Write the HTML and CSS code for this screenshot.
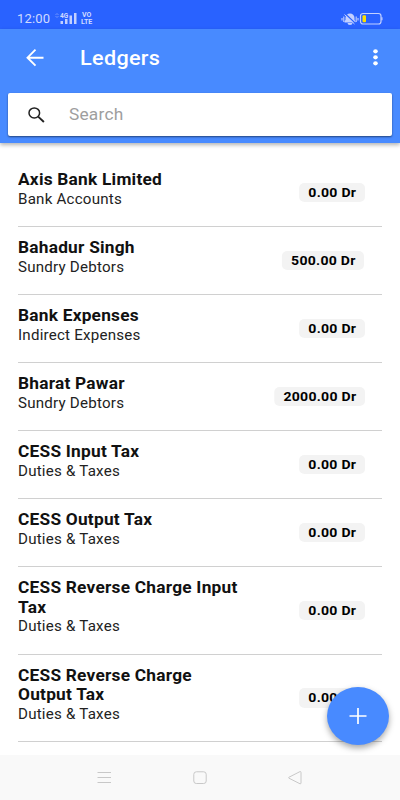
FILE: index.html
```html
<!DOCTYPE html>
<html lang="en">
<head>
    <meta charset="UTF-8">
    <meta name="viewport" content="width=device-width, initial-scale=1.0">
    <title>Ledgers</title>
    <link rel="stylesheet" href="styles.css">
</head>
<body>
    <div class="status-bar">
        <span class="time">12:00</span>
        <svg class="signal" width="24" height="14" viewBox="0 0 24 14">
            <path d="M0.5 3L2 1.500L3.500 3M0.500 4L2 5.500L3.500 4" fill="none" stroke="#7f9fff" stroke-width="0.800"/>
            <text x="5" y="5.500" font-size="6.500" font-weight="bold" fill="#d0daff">4G</text>
            <path d="M5.500 9h2.500v3h-2.500zM10 7h2.500v5h-2.500zM14.500 3.500h2.500v8.500h-2.500zM19 1h2.500v11h-2.500z" fill="#c3d0ff"/>
        </svg>
        <span class="volte">VO<br>LTE</span>
        <svg class="mute" width="18" height="14" viewBox="0 0 18 14">
            <path d="M3.500 10.500V9l1-1V6a4.500 4.500 0 0 1 9 0v2l1 1v1.500zM6.500 11h5a2.500 2 0 0 1-5 0z" fill="#c3d0ff"/>
            <path d="M1 6v2.500M2.800 4.500v5.500M15.200 4.500v5.500M17 6v2.500" stroke="#c3d0ff" stroke-width="1.100"/>
            <path d="M4.500 2l10 9.500" stroke="#2962ff" stroke-width="1.200"/>
            <path d="M3.500 2.500l10 9.500" stroke="#c3d0ff" stroke-width="1"/>
        </svg>
        <svg class="battery" width="24" height="14" viewBox="0 0 24 14">
            <rect x="1.500" y="1.500" width="20.500" height="10.500" rx="2.500" fill="none" stroke="#c3d0ff" stroke-width="1.200"/>
            <rect x="3.500" y="3.200" width="3.500" height="7" rx="1" fill="#ffe000"/>
            <path d="M22.900 5.200v3" stroke="#c3d0ff" stroke-width="1.200"/>
        </svg>
    </div>

    <header class="header">
        <div class="toolbar">
            <svg class="back" width="18" height="18" viewBox="0 0 18 18">
                <path d="M17.500 8.700H1.500M9.500 0.700L1.500 8.700L9.500 16.700" fill="none" stroke="#fff" stroke-width="1.900"/>
            </svg>
            <h1><span class="wide">Ledgers</span></h1>
            <svg class="more" width="6" height="18" viewBox="0 0 6 18">
                <g fill="#fff">
                    <ellipse cx="3.500" cy="2.300" rx="2.300" ry="2.100"/>
                    <ellipse cx="3.500" cy="8.300" rx="2.300" ry="2.100"/>
                    <ellipse cx="3.500" cy="14.300" rx="2.300" ry="2.100"/>
                </g>
            </svg>
        </div>
        <div class="search">
            <svg width="17" height="16" viewBox="0 0 17 16">
                <ellipse cx="6.300" cy="5.900" rx="5.300" ry="5" fill="none" stroke="#222" stroke-width="1.500"/>
                <path d="M10.200 9.600L15.900 15" stroke="#222" stroke-width="1.900"/>
            </svg>
            <span class="placeholder wide">Search</span>
        </div>
    </header>

    <main class="ledgers">
        <div class="ledger">
            <div class="info">
                <h2>Axis Bank Limited</h2>
                <p>Bank Accounts</p>
            </div>
            <span class="balance">0.00 Dr</span>
        </div>
        <div class="ledger">
            <div class="info">
                <h2>Bahadur Singh</h2>
                <p>Sundry Debtors</p>
            </div>
            <span class="balance">500.00 Dr</span>
        </div>
        <div class="ledger">
            <div class="info">
                <h2>Bank Expenses</h2>
                <p>Indirect Expenses</p>
            </div>
            <span class="balance">0.00 Dr</span>
        </div>
        <div class="ledger">
            <div class="info">
                <h2>Bharat Pawar</h2>
                <p>Sundry Debtors</p>
            </div>
            <span class="balance">2000.00 Dr</span>
        </div>
        <div class="ledger">
            <div class="info">
                <h2>CESS Input Tax</h2>
                <p>Duties &amp; Taxes</p>
            </div>
            <span class="balance">0.00 Dr</span>
        </div>
        <div class="ledger">
            <div class="info">
                <h2>CESS Output Tax</h2>
                <p>Duties &amp; Taxes</p>
            </div>
            <span class="balance">0.00 Dr</span>
        </div>
        <div class="ledger">
            <div class="info">
                <h2>CESS Reverse Charge Input<br>Tax</h2>
                <p>Duties &amp; Taxes</p>
            </div>
            <span class="balance">0.00 Dr</span>
        </div>
        <div class="ledger">
            <div class="info">
                <h2>CESS Reverse Charge<br>Output Tax</h2>
                <p>Duties &amp; Taxes</p>
            </div>
            <span class="balance">0.00 Dr</span>
        </div>
    </main>

    <div class="fab">
        <svg width="18" height="16" viewBox="0 0 18 16">
            <path d="M9 0v16M0.500 8h17" stroke="#fff" stroke-width="1.700"/>
        </svg>
    </div>

    <nav class="nav-bar">
        <svg width="14" height="14" viewBox="0 0 14 14">
            <path d="M0.500 1.500h13.500M0.500 6.500h13.500M0.500 11.500h13.500" stroke="#c8c8c8" stroke-width="1"/>
        </svg>
        <svg width="14" height="14" viewBox="0 0 14 14">
            <rect x="0.800" y="0.800" width="12.400" height="11.700" rx="2.500" fill="none" stroke="#c8c8c8"/>
        </svg>
        <svg width="14" height="14" viewBox="0 0 14 14">
            <path d="M0.800 6.300L12 0.600Q13 0.400 13 1.400V12Q13 13 12 12.800L0.800 7.100Q0.300 6.700 0.800 6.300z" fill="none" stroke="#c8c8c8"/>
        </svg>
    </nav>
</body>
</html>
```
FILE: styles.css
```css
body {
    margin: 0;
    height: 800px;
    display: flex;
    flex-direction: column;
    overflow: hidden;
    font-family: Roboto, Arial, sans-serif;
    background-color: #fff;
    color: #111;
}

svg {
    display: block;
    flex-shrink: 0;
}

h1, h2, p {
    margin: 0;
}

.wide {
    display: inline-block;
    transform: scaleX(1.08);
    transform-origin: left center;
}

.status-bar {
    display: flex;
    align-items: center;
    box-sizing: border-box;
    height: 29px;
    padding: 8px 16px 0 17px;
    background-color: #2962ff;
    color: #c3d0ff;
}

.time {
    width: 38px;
    font-size: 13px;
    letter-spacing: 0.2px;
    color: #d0daff;
}

.volte {
    margin-left: 2px;
    font-size: 7px;
    line-height: 6.5px;
    font-weight: bold;
    text-align: center;
    color: #d0daff;
}

.mute {
    margin-left: auto;
}

.battery {
    margin: 0 1px 0 0;
}

.header {
    position: relative;
    flex-shrink: 0;
    height: 114px;
    background-color: #488aff;
    box-shadow: 0 2px 4px rgba(0, 0, 0, 0.3);
}

.toolbar {
    display: flex;
    align-items: center;
    height: 57px;
    padding: 0 22px 0 26px;
}

h1 {
    margin-left: 36px;
    font-size: 20px;
    font-weight: 500;
    letter-spacing: 0.3px;
    color: #fff;
}

.more {
    margin-left: auto;
}

.search {
    display: flex;
    align-items: center;
    height: 43px;
    margin: 7px 8px 0;
    padding-left: 20px;
    border-radius: 2px;
    background-color: #fff;
    box-shadow: 0 1px 2px rgba(0, 0, 0, 0.5);
}

.placeholder {
    margin-left: 24px;
    font-size: 16px;
    letter-spacing: 0.2px;
    color: #9e9e9e;
}

.ledgers {
    flex: 1;
    min-height: 0;
    padding: 16px 18px 0;
    overflow: hidden;
}

.ledger {
    display: flex;
    align-items: center;
    justify-content: space-between;
    box-sizing: border-box;
    min-height: 68px;
    padding-right: 17.5px;
    border-bottom: 1px solid #d0d0d0;
}

.info {
    padding: 11px 0 17px;
    transform: scaleX(1.08);
    transform-origin: left center;
}

h2 {
    font-size: 16px;
    line-height: 19.5px;
    font-weight: bold;
    letter-spacing: 0.22px;
}

p {
    font-size: 14px;
    line-height: 19.5px;
    letter-spacing: 0.2px;
    color: #222;
}

.balance {
    padding: 2px 8px 2px 8.5px;
    border-radius: 5px;
    background-color: #f3f3f3;
    font-size: 13px;
    line-height: 15.5px;
    font-weight: bold;
    letter-spacing: 0.25px;
    color: #000;
    transform: scaleX(1.08);
    transform-origin: right center;
}

.fab {
    position: absolute;
    left: 327px;
    top: 687px;
    display: flex;
    align-items: center;
    justify-content: center;
    width: 62px;
    height: 58px;
    border-radius: 50%;
    background-color: #488aff;
    box-shadow: 0 3px 6px rgba(0, 0, 0, 0.35);
}

.nav-bar {
    display: flex;
    align-items: center;
    justify-content: space-between;
    flex-shrink: 0;
    height: 45px;
    padding: 0 98px 0 97px;
    background-color: #f9f9f9;
}
```
